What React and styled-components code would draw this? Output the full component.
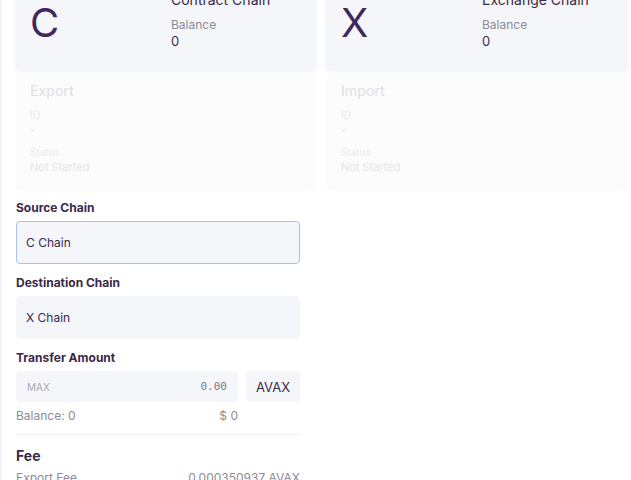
import React from 'react';
import styled, { createGlobalStyle } from 'styled-components';

const GlobalStyle = createGlobalStyle`
  html, body {
    margin: 0;
    padding: 0;
    background: #ffffff;
    overflow: hidden;
  }
  body {
    font-family: Inter, "Noto Sans", sans-serif;
    color: #3a2848;
  }
`;

const chains = [
  { letter: 'C', name: 'Contract Chain', balance: '0', tx: 'Export' },
  { letter: 'X', name: 'Exchange Chain', balance: '0', tx: 'Import' },
];

const App = () => {
  return (
    <>
      <GlobalStyle />
      <StPage>
        <StCards>
          {chains.map((c) => (
            <StChainCard key={c.letter}>
              <StLetter>{c.letter}</StLetter>
              <StChainInfo>
                <h4>{c.name}</h4>
                <label>Balance</label>
                <p>{c.balance}</p>
              </StChainInfo>
            </StChainCard>
          ))}
          {chains.map((c) => (
            <StTxCard key={c.tx}>
              <h4>{c.tx}</h4>
              <label>ID</label>
              <p>-</p>
              <label>Status</label>
              <p>Not Started</p>
            </StTxCard>
          ))}
        </StCards>

        <StForm>
          <StLabel>Source Chain</StLabel>
          <StSelect $focused>C Chain</StSelect>

          <StLabel>Destination Chain</StLabel>
          <StSelect>X Chain</StSelect>

          <StLabel>Transfer Amount</StLabel>
          <StAmountRow>
            <StAmountInput>
              <span>MAX</span>
              <code>0.00</code>
            </StAmountInput>
            <StToken>AVAX</StToken>
          </StAmountRow>
          <StBalanceRow>
            <span>Balance: 0</span>
            <span>$ 0</span>
          </StBalanceRow>

          <StDivider />

          <StFeeTitle>Fee</StFeeTitle>
          <StFeeRow>
            <span>Export Fee</span>
            <span>0.000350937 AVAX</span>
          </StFeeRow>
        </StForm>
      </StPage>
    </>
  );
};

export default App;

const StPage = styled.div`
  margin-top: -34px;
  min-height: 560px;
  padding: 0 3px 0 15px;
  border-left: 2px solid #f3f4f9;
  box-sizing: border-box;
`;

const StCards = styled.div`
  display: grid;
  grid-template-columns: 301px 302px;
  column-gap: 10px;
  row-gap: 2px;
  margin-left: -2px;
`;

const StChainCard = styled.div`
  display: flex;
  align-items: center;
  height: 105px;
  padding: 0 15px;
  background: #f5f6fa;
  border-radius: 6px;
  box-shadow: 0 2px 4px rgba(0, 0, 0, 0.04);
  box-sizing: border-box;
`;

const StLetter = styled.div`
  width: 141px;
  font-size: 40px;
  line-height: 1;
  color: #41285a;
  padding-top: 8px;
`;

const StChainInfo = styled.div`
  display: flex;
  flex-direction: column;
  padding-top: 2px;

  & h4 {
    margin: 0 0 9px;
    font-size: 14px;
    font-weight: 400;
    color: #3a2848;
  }
  & label {
    font-size: 12px;
    color: #8d8b95;
    line-height: 16px;
  }
  & p {
    margin: 0;
    font-size: 13px;
    line-height: 16px;
    color: #41285a;
  }
`;

const StTxCard = styled.div`
  display: flex;
  flex-direction: column;
  height: 117px;
  padding: 9px 15px;
  background: #fcfcfd;
  border-radius: 6px;
  box-shadow: 0 1px 3px rgba(0, 0, 0, 0.02);
  box-sizing: border-box;

  & h4 {
    margin: 0 0 6px;
    font-size: 14px;
    font-weight: 500;
    line-height: 18px;
    color: #e4e2e7;
  }
  & label {
    font-size: 10px;
    line-height: 14px;
    color: #eceaee;
    margin-top: 2px;
  }
  & p {
    margin: 1px 0 5px;
    font-size: 11px;
    line-height: 15px;
    color: #e6e4e9;
  }
`;

const StForm = styled.div`
  display: flex;
  flex-direction: column;
  width: 284px;
  margin-top: 10px;
  margin-left: -1px;
`;

const StLabel = styled.div`
  font-size: 12px;
  font-weight: 700;
  line-height: 16px;
  color: #3a2848;
  margin-bottom: 5px;
`;

const StSelect = styled.div`
  display: flex;
  align-items: center;
  height: 43px;
  padding: 0 9px;
  margin-bottom: 11px;
  background: #f5f6fa;
  border: 1px solid ${(props) => (props.$focused ? '#a9c2f0' : '#f5f6fa')};
  border-radius: 4px;
  font-size: 12px;
  color: #3a2848;
  box-sizing: border-box;
`;

const StAmountRow = styled.div`
  display: flex;
  gap: 8px;
  height: 31px;
`;

const StAmountInput = styled.div`
  flex: 1;
  display: flex;
  align-items: center;
  justify-content: space-between;
  padding: 0 11px;
  background: #f5f6fa;
  border-radius: 4px;

  & span {
    font-size: 10px;
    color: #a9a7b0;
  }
  & code {
    font-family: "DejaVu Sans Mono", "Liberation Mono", monospace;
    font-size: 11px;
    color: #7b7982;
  }
`;

const StToken = styled.div`
  width: 54px;
  display: flex;
  align-items: center;
  justify-content: center;
  background: #f5f6fa;
  border-radius: 4px;
  font-size: 13px;
  color: #3a2848;
`;

const StBalanceRow = styled.div`
  display: flex;
  justify-content: space-between;
  width: 222px;
  margin-top: 7px;
  font-size: 12px;
  line-height: 14px;
  color: #8d8b95;
`;

const StDivider = styled.div`
  height: 1px;
  background: #f3f3f6;
  margin: 11px 0 12px;
`;

const StFeeTitle = styled.div`
  font-size: 14px;
  font-weight: 700;
  line-height: 18px;
  color: #3a2848;
`;

const StFeeRow = styled.div`
  display: flex;
  justify-content: space-between;
  margin-top: 5px;
  font-size: 12px;
  line-height: 16px;
  color: #8d8b95;
`;
